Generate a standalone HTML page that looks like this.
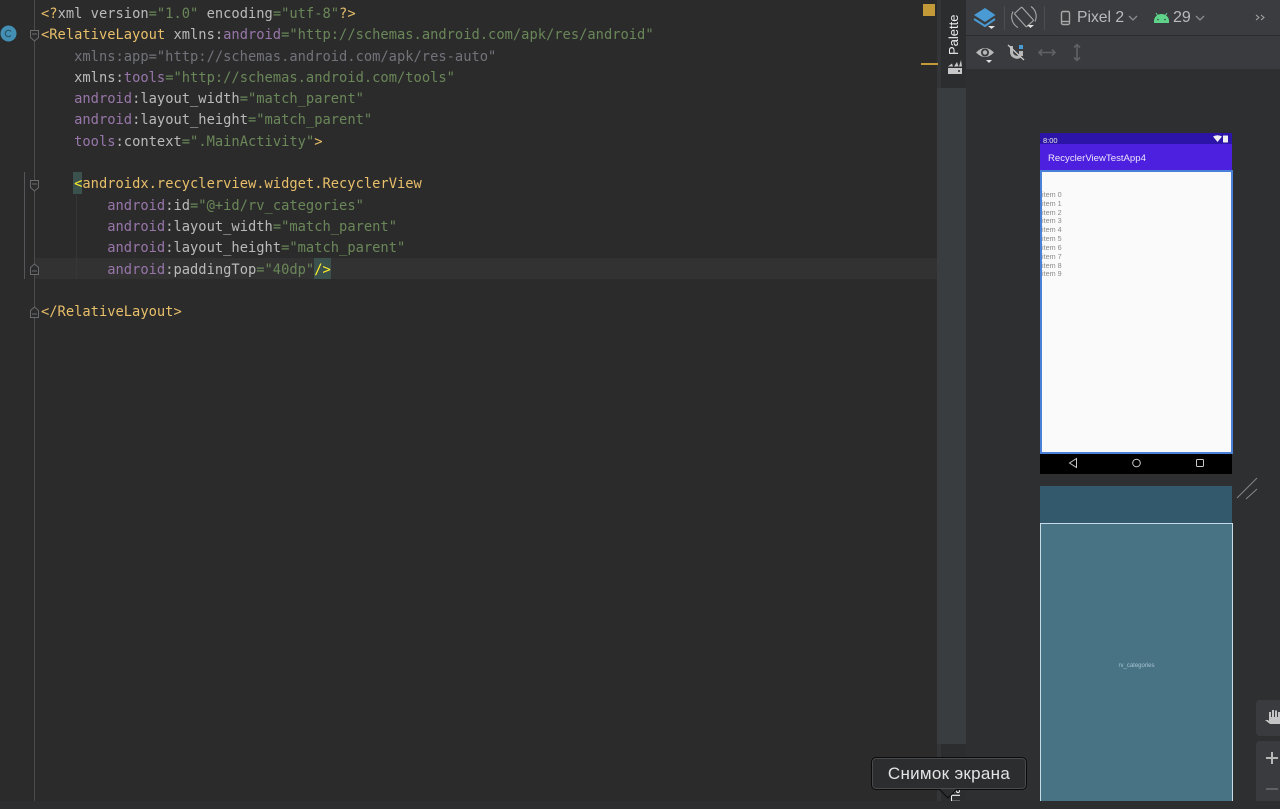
<!DOCTYPE html>
<html><head><meta charset="utf-8"><style>
html,body{margin:0;padding:0;background:#2d2e30;width:1280px;height:801px;overflow:hidden}
.a{position:absolute}
#ed{left:0;top:0;width:938px;height:801px;background:#2b2b2b}
.l{position:absolute;left:41px;white-space:pre;font:13.75px/21px "DejaVu Sans Mono","Liberation Mono",monospace;color:#a9b7c6;letter-spacing:0}
.t{color:#e8bf6a}.p{color:#9876aa}.s{color:#6a8759}.g{color:#72737a}.w{color:#bababa}
.ui{font-family:"Liberation Sans",sans-serif}
</style></head><body>
<div class="a" id="ed"></div>
<div class="a" style="left:35px;top:258px;width:903px;height:21px;background:#323232"></div>
<div class="a" style="left:34px;top:0;width:1px;height:801px;background:#4a4b4d"></div>
<div class="a" style="left:24px;top:172px;width:1px;height:107px;background:#55565a"></div>
<div class="a" style="left:76px;top:195px;width:1px;height:84px;background:#363636"></div>
<div class="a" style="left:73px;top:172px;width:9px;height:22px;background:#3b514d"></div>
<div class="a" style="left:314px;top:258px;width:17px;height:21px;background:#3b514d"></div>

<div class="l" style="top:4px"><span class="t">&lt;?</span><span class="w">xml version</span><span class="s">="1.0"</span><span class="w"> encoding</span><span class="s">="utf-8"</span><span class="t">?&gt;</span></div>
<div class="l" style="top:25px"><span class="t">&lt;RelativeLayout</span><span class="w"> xmlns:</span><span class="p">android</span><span class="s">="http://schemas.android.com/apk/res/android"</span></div>
<div class="l g" style="top:47px">    xmlns:app="http://schemas.android.com/apk/res-auto"</div>
<div class="l" style="top:68px">    <span class="w">xmlns:</span><span class="p">tools</span><span class="s">="http://schemas.android.com/tools"</span></div>
<div class="l" style="top:89px">    <span class="p">android</span><span class="w">:layout_width</span><span class="s">="match_parent"</span></div>
<div class="l" style="top:110px">    <span class="p">android</span><span class="w">:layout_height</span><span class="s">="match_parent"</span></div>
<div class="l" style="top:132px">    <span class="p">tools</span><span class="w">:context</span><span class="s">=".MainActivity"</span><span class="t">&gt;</span></div>
<div class="l" style="top:174px">    <span style="color:#ffef28">&lt;</span><span class="t">androidx.recyclerview.widget.RecyclerView</span></div>
<div class="l" style="top:196px">        <span class="p">android</span><span class="w">:id</span><span class="s">="@+id/rv_categories"</span></div>
<div class="l" style="top:217px">        <span class="p">android</span><span class="w">:layout_width</span><span class="s">="match_parent"</span></div>
<div class="l" style="top:238px">        <span class="p">android</span><span class="w">:layout_height</span><span class="s">="match_parent"</span></div>
<div class="l" style="top:260px">        <span class="p">android</span><span class="w">:paddingTop</span><span class="s">="40dp"</span><span style="color:#ffef28">/&gt;</span></div>
<div class="l" style="top:302px"><span class="t">&lt;/RelativeLayout&gt;</span></div>

<svg class="a" style="left:0;top:0" width="60" height="330" fill="#2b2b2b" stroke="#6a6b6d" stroke-width="1">
<circle cx="8.500" cy="33.500" r="8" fill="#4390b4" stroke="none"/>
<path d="M11 31.500a3.200 3.200 0 1 0 0 4" fill="none" stroke="#2a5568" stroke-width="1.200"/>
<path d="M30.500 30.500h8v7l-4 3.500l-4-3.500z"/><path d="M32 34h5"/>
<path d="M30.500 180.500h8v7l-4 3.500l-4-3.500z"/><path d="M32 184h5"/>
<path d="M30.500 274.500h8v-7l-4-3.500l-4 3.500z"/><path d="M32 271h5"/>
<path d="M30.500 317.500h8v-7l-4-3.500l-4 3.500z"/><path d="M32 314h5"/>
</svg>

<!-- scrollbar / markers -->
<div class="a" style="left:937px;top:0;width:29px;height:801px;background:#3a3d40"></div>
<div class="a" style="left:937px;top:0;width:4px;height:88px;background:#333537"></div>
<div class="a" style="left:937px;top:744px;width:4px;height:57px;background:#333537"></div>
<div class="a" style="left:923px;top:4px;width:12px;height:12px;background:#c39a37"></div>
<div class="a" style="left:921px;top:63px;width:17px;height:2px;background:#c39a37"></div>
<div class="a" style="left:941px;top:0;width:25px;height:88px;background:#2c2d2f"></div>
<div class="a" style="left:941px;top:744px;width:25px;height:57px;background:#2c2d2f"></div>
<div class="a ui" style="left:947px;top:55px;width:40px;height:14px;transform-origin:0 0;transform:rotate(-90deg);color:#f0f0f0;font-size:13px;line-height:14px;white-space:nowrap">Palette</div>
<svg class="a" style="left:948px;top:60px" width="14" height="15" fill="#c8c8c8"><path d="M0 8h14v6H0z"/><path d="M0 6.500l4-3 1 3zM6 6.500l3-4.500 1.500 4.500zM11 6.500l2-6.500 1 6.500z"/><circle cx="11" cy="11" r="1" fill="#2c2d2f"/></svg>

<!-- right panel -->
<div class="a" style="left:966px;top:0;width:314px;height:801px;background:#2e2f31"></div>
<div class="a" style="left:966px;top:0;width:314px;height:35px;background:#3a3c3f"></div>
<div class="a" style="left:966px;top:35px;width:314px;height:34px;background:#393b3e;border-top:1px solid #2b2c2e;box-sizing:border-box"></div>
<div class="a" style="left:1004px;top:6px;width:1px;height:24px;background:#4c4e50"></div>
<div class="a" style="left:1044px;top:6px;width:1px;height:24px;background:#4c4e50"></div>

<svg class="a" style="left:966px;top:0" width="314" height="69" fill="none">
<path d="M19 8l10.500 7L19 22 8 15z" fill="#4a9ad4"/>
<path d="M8 19l11 7 10-7" stroke="#4a9ad4" stroke-width="2"/>
<path d="M22 26h7l-3.500 3z" fill="#e0e0e0"/>
<g stroke="#a8a8a8" stroke-width="1.100">
<rect x="-5" y="-9" width="10" height="18" rx="1" transform="translate(58 17) rotate(-42)"/>
<path d="M52 27.500a12 12 0 0 1-5-16M65 6.500a12 12 0 0 1 4 15"/>
</g>
<path d="M61 25h7l-3.500 3z" fill="#e0e0e0"/>
<g stroke="#a8a8a8" stroke-width="1.400"><rect x="95.500" y="11.500" width="8" height="13" rx="1.500"/><path d="M95 21.500h9"/></g>
<path d="M163 16l4 4 4-4M230 16l4 4 4-4" stroke="#8a8c8e" stroke-width="1.300"/>
<path d="M188 23v-2a7.500 7 0 0 1 15 0v2z" fill="#5fd38a"/>
<path d="M190 13l2 3M201 13l-2 3" stroke="#5fd38a"/>
<circle cx="192" cy="19.500" r=".8" fill="#3a3c3f"/><circle cx="199" cy="19.500" r=".8" fill="#3a3c3f"/>
<path d="M290 15l3 2.500-3 2.500M295 15l3 2.500-3 2.500" stroke="#a8a8a8"/>
<path d="M10 52.500q9-9 18 0q-9 9-18 0z" fill="#b8b8b8"/><circle cx="19" cy="52.500" r="4" fill="#393b3e"/><circle cx="19" cy="52.500" r="2.200" fill="#b8b8b8"/>
<path d="M20 60h6l-3 3z" fill="#e0e0e0"/>
<path d="M45.500 46v6a5.500 5.500 0 0 0 9 4" stroke="#b8b8b8" stroke-width="3"/>
<path d="M42 45l16 15" stroke="#c8c8c8" stroke-width="1.300"/>
<rect x="53" y="45" width="4" height="4" fill="#4a9ad4"/><rect x="53" y="51" width="4" height="5" fill="#b8b8b8"/>
<path d="M73 52.500h16M76 49.500l-3 3 3 3M86 49.500l3 3-3 3" stroke="#5f6163" stroke-width="1.600"/>
<path d="M111 44.500v16M108 47.500l3-3 3 3M108 57.500l3 3 3-3" stroke="#5f6163" stroke-width="1.600"/>
</svg>
<div class="a ui" style="left:1077px;top:9px;color:#b8babc;font-size:15.700px;line-height:18px">Pixel 2</div>
<div class="a ui" style="left:1173px;top:9px;color:#b8babc;font-size:16px;line-height:18px">29</div>

<!-- phone -->
<div class="a" style="left:1040px;top:133px;width:192px;height:11px;background:#2d14a8"></div>
<div class="a ui" style="left:1043px;top:136px;color:#e8e8e8;font-size:7.500px;line-height:9px">8:00</div>
<svg class="a" style="left:1212px;top:134px" width="20" height="10" fill="#f0f0f0"><path d="M1 2.500q4.500-2.500 9 0L5.500 8z"/><rect x="11" y="1.500" width="5" height="7" rx=".5"/></svg>
<div class="a" style="left:1040px;top:144px;width:192px;height:26px;background:#4d1fde"></div>
<div class="a ui" style="left:1048px;top:152px;color:#ece6fb;font-size:9.600px;line-height:13px">RecyclerViewTestApp4</div>
<div class="a ui" style="left:1040px;top:170px;width:193px;height:284px;box-sizing:border-box;background:#fafafa;border:solid #4a80d8;border-width:2px 2px 2px 2px;color:#8a8a8a;font-size:7.200px;line-height:8.830px;padding:19px 0 0 0">item 0<br>item 1<br>item 2<br>item 3<br>item 4<br>item 5<br>item 6<br>item 7<br>item 8<br>item 9</div>
<div class="a" style="left:1040px;top:454px;width:192px;height:20px;background:#000"></div>
<svg class="a" style="left:1040px;top:453px" width="192" height="20" fill="none" stroke="#c8c8c8"><path d="M29.500 10l7-4.500v9z"/><circle cx="96.500" cy="10" r="3.800"/><rect x="156.500" y="6.500" width="7" height="7" rx="1"/></svg>

<!-- blueprint -->
<div class="a" style="left:1040px;top:486px;width:192px;height:315px;background:#325a6c"></div>
<div class="a ui" style="left:1040px;top:523px;width:193px;height:278px;box-sizing:border-box;background:#477385;border:1px solid #c6dce6;border-bottom:0;color:#a8c4d0;font-size:6px;text-align:center;line-height:285px">rv_categories</div>
<svg class="a" style="left:1236px;top:476px" width="24" height="26" stroke="#85878a" fill="none"><path d="M1 22L21 2M10 23l11-10"/></svg>

<!-- side tools -->
<div class="a" style="left:1256px;top:700px;width:24px;height:36px;background:#393b3e;border-radius:4px 0 0 4px"></div>
<svg class="a" style="left:1265px;top:709px" width="15" height="19" fill="#c4c4c4"><path d="M0 11l3 0 1 1V3h2v5h1V1h2v7h1V1.500h2V8h1V3h2v12H5z"/></svg>
<div class="a" style="left:1256px;top:741px;width:24px;height:60px;background:#393b3e;border-radius:4px 0 0 0"></div>
<svg class="a" style="left:1266px;top:752px" width="14" height="40" stroke-width="2" fill="none"><path d="M0 6h12M6 0v12" stroke="#b8b8b8"/><path d="M0 37h12" stroke="#5f6163"/></svg>

<!-- tooltip -->
<div class="a" style="left:950px;top:787px;width:12px;height:14px;overflow:hidden"><div class="ui" style="transform:rotate(-90deg);transform-origin:0 0;position:absolute;left:-1px;top:16px;color:#eee;font-size:13px;line-height:13px;white-space:nowrap">Палитра</div></div>
<svg class="a" style="left:938px;top:787px" width="20" height="13"><path d="M0 1L10 11L20 1z" fill="#2c2d2e" stroke="#0c0c0c"/></svg>
<div class="a ui" style="left:871px;top:757px;width:156px;height:33px;box-sizing:border-box;background:#2c2d2e;border:1px solid #0c0c0c;box-shadow:inset 0 0 0 1px #4a4b4c;border-radius:5px;color:#e4e4e4;font-size:17px;line-height:32px;text-align:center;letter-spacing:.3px">Снимок экрана</div>
<svg class="a" style="left:940px;top:789px" width="16" height="8"><path d="M0 0L8 8L16 0z" fill="#2c2d2e"/></svg>
</body></html>
